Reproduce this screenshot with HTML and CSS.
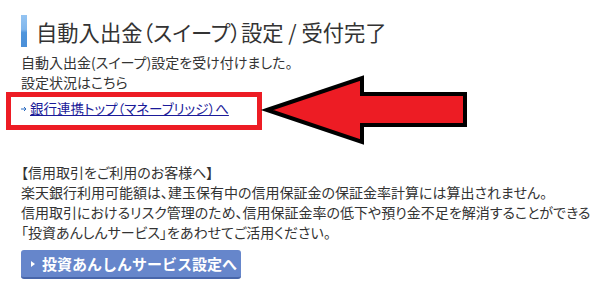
FILE: index.html
```html
<!DOCTYPE html>
<html lang="ja">

<head>
    <meta charset="UTF-8">
    <meta name="viewport" content="width=device-width, initial-scale=1.0">
    <title>自動入出金（スイープ）設定 / 受付完了</title>
    <link rel="stylesheet" href="styles.css">
</head>

<body>
    <div id="page">
        <h1 class="titulo">
            <span class="barra"></span>
            <span>自動入出金（スイープ）設定 / 受付完了</span>
        </h1>

        <p class="texto">自動入出金(スイープ)設定を受け付けました。<br>設定状況はこちら</p>

        <p class="link-linha">
            <svg class="seta-link" width="6" height="6" viewBox="0 0 6 6">
                <path d="M0 3 H5 M3 1 L5 3 L3 5" fill="none" stroke="#2a6bc0" stroke-width="1" />
            </svg>
            <a href="#">銀行連携トップ（マネーブリッジ）へ</a>
        </p>

        <p class="texto aviso">
            【信用取引をご利用のお客様へ】<br>
            楽天銀行利用可能額は、建玉保有中の信用保証金の保証金率計算には算出されません。<br>
            信用取引におけるリスク管理のため、信用保証金率の低下や預り金不足を解消することができる<br>
            「投資あんしんサービス」をあわせてご活用ください。
        </p>

        <a href="#" class="botao"><span class="triangulo"></span>投資あんしんサービス設定へ</a>

        <!-- marcacao em vermelho por cima da tela -->
        <div class="caixa-vermelha"></div>
        <svg class="seta-grande" width="220" height="80" viewBox="0 0 220 80">
            <polygon points="12,38 107,6 107,22 210,22 210,53 107,53 107,70"
                fill="#ed1c24" stroke="#000" stroke-width="4" />
        </svg>
    </div>
</body>

</html>
```

FILE: styles.css
```css
body {
    margin: 0;
    font-family: "Noto Sans CJK JP", "Noto Sans", sans-serif;
    color: #333;
    background-color: #fff;
}

#page {
    position: relative;
    padding: 15px 21px 0 21px;
}

.titulo {
    display: flex;
    align-items: center;
    gap: 9px;
    margin: 0;
    height: 32px;
    font-size: 21.3px;
    font-weight: normal;
    color: #333;
    font-feature-settings: "palt";
}

.barra {
    width: 6px;
    height: 32px;
    background: linear-gradient(#94c4f2 0%, #80b6ec 45%, #4f95dc 55%, #4a8fd8 100%);
}

.texto {
    margin: 0;
    font-size: 14px;
    line-height: 20px;
    font-feature-settings: "palt";
}

.titulo + .texto {
    margin-top: 5px;
}

.link-linha {
    display: flex;
    align-items: center;
    gap: 3px;
    margin: 6px 0 0 0;
    font-size: 13.5px;
    line-height: 20px;
    font-feature-settings: "palt";
}

.seta-link {
    margin-top: 1px;
}

.link-linha a {
    color: #1a1a99;
}

.aviso {
    margin-top: 44px;
}

.botao {
    display: inline-flex;
    align-items: center;
    margin-top: 8px;
    width: 220px;
    height: 29px;
    box-sizing: border-box;
    padding-left: 10px;
    background-color: #6686cb;
    border-bottom: 2px solid #4866aa;
    border-radius: 3px;
    color: #fff;
    font-size: 15px;
    font-weight: bold;
    text-decoration: none;
}

.triangulo {
    width: 0;
    height: 0;
    border-left: 4px solid #fff;
    border-top: 3px solid transparent;
    border-bottom: 3px solid transparent;
    margin-right: 7px;
}

.caixa-vermelha {
    position: absolute;
    left: 6px;
    top: 92px;
    width: 256px;
    height: 38px;
    box-sizing: border-box;
    border: 5px solid #ed1c24;
}

.seta-grande {
    position: absolute;
    left: 255px;
    top: 72px;
}
```
